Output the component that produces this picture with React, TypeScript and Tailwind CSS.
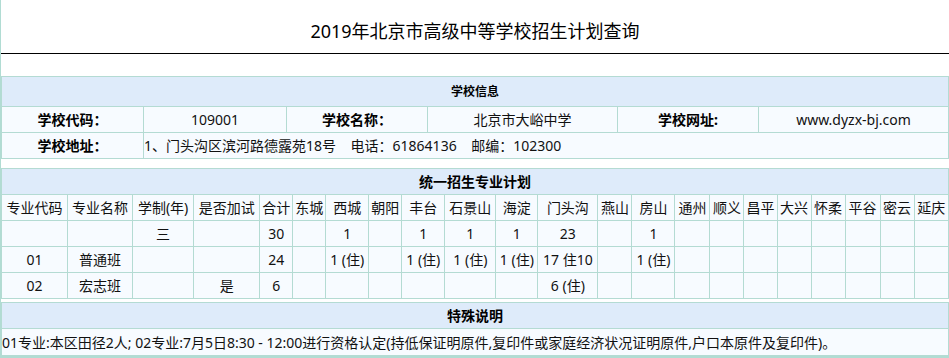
const cell = "border border-[#b4dbd3] bg-[#f7fbff] text-center p-0 text-[14px] text-[#111] h-[26px] whitespace-nowrap overflow-hidden";
const head = "border border-[#b4dbd3] bg-[#deebfa] text-center p-0 font-bold text-black";
const label = "border border-[#b4dbd3] bg-[#f7fbff] text-center p-0 text-[14px] font-bold text-black h-[26px] whitespace-nowrap";

const districts = ["东城", "西城", "朝阳", "丰台", "石景山", "海淀", "门头沟", "燕山", "房山", "通州", "顺义", "昌平", "大兴", "怀柔", "平谷", "密云", "延庆"];
const planWidths = [66, 65, 61, 66, 33, 33, 43, 33, 43, 51, 42, 60, 34, 43, 35, 34, 33, 34, 34, 35, 34, 34];

const rows: string[][] = [
  ["", "", "三", "", "30", "", "1", "", "1", "1", "1", "23", "", "1", "", "", "", "", "", "", "", ""],
  ["01", "普通班", "", "", "24", "", "1 (住)", "", "1 (住)", "1 (住)", "1 (住)", "17 住10", "", "1 (住)", "", "", "", "", "", "", "", ""],
  ["02", "宏志班", "", "是", "6", "", "", "", "", "", "", "6 (住)", "", "", "", "", "", "", "", "", "", ""],
];

export default function App() {
  return (
    <div className="w-[949px] h-[358px] overflow-hidden bg-white border-l border-b-2 border-[#b1dcd3] font-['Noto_Sans','Noto_Sans_CJK_SC',sans-serif]">
      <div className="h-[54px] border-b border-black text-center text-[18px] leading-[24px] pt-[19px] text-black">
        2019年北京市高级中等学校招生计划查询
      </div>

      <table className="mt-[22px] w-full table-fixed border-collapse">
        <colgroup>
          <col className="w-[142px]" />
          <col className="w-[143px]" />
          <col className="w-[141px]" />
          <col className="w-[190px]" />
          <col className="w-[141px]" />
          <col />
        </colgroup>
        <tbody>
          <tr>
            <td colSpan={6} className={`${head} text-[12px] h-[30px]`}>学校信息</td>
          </tr>
          <tr>
            <td className={label}>学校代码：</td>
            <td className={cell}>109001</td>
            <td className={label}>学校名称：</td>
            <td className={cell}>北京市大峪中学</td>
            <td className={label}>学校网址:</td>
            <td className={cell}>www.dyzx-bj.com</td>
          </tr>
          <tr>
            <td className={label}>学校地址：</td>
            <td colSpan={5} className={`${cell} text-left`}>
              1、门头沟区滨河路德露苑18号&nbsp;&nbsp;&nbsp;&nbsp;电话：61864136&nbsp;&nbsp;&nbsp;&nbsp;邮编：102300
            </td>
          </tr>
        </tbody>
      </table>

      <table className="mt-[9px] w-full table-fixed border-collapse">
        <colgroup>
          {planWidths.map((w, i) => (
            <col key={i} style={{ width: w }} />
          ))}
        </colgroup>
        <tbody>
          <tr>
            <td colSpan={22} className={`${head} text-[14px] h-[26px]`}>统一招生专业计划</td>
          </tr>
          <tr>
            {["专业代码", "专业名称", "学制(年)", "是否加试", "合计", ...districts].map((h) => (
              <td key={h} className={cell}>{h}</td>
            ))}
          </tr>
          {rows.map((r, i) => (
            <tr key={i}>
              {r.map((v, j) => (
                <td key={j} className={cell}>{v}</td>
              ))}
            </tr>
          ))}
        </tbody>
      </table>

      <table className="mt-[3px] w-full table-fixed border-collapse">
        <tbody>
          <tr>
            <td className={`${head} text-[14px] h-[26px]`}>特殊说明</td>
          </tr>
          <tr>
            <td className={`${cell} text-left h-[27px]`}>
              01专业:本区田径2人; 02专业:7月5日8:30 - 12:00进行资格认定(持低保证明原件,复印件或家庭经济状况证明原件,户口本原件及复印件)。
            </td>
          </tr>
        </tbody>
      </table>
    </div>
  );
}
